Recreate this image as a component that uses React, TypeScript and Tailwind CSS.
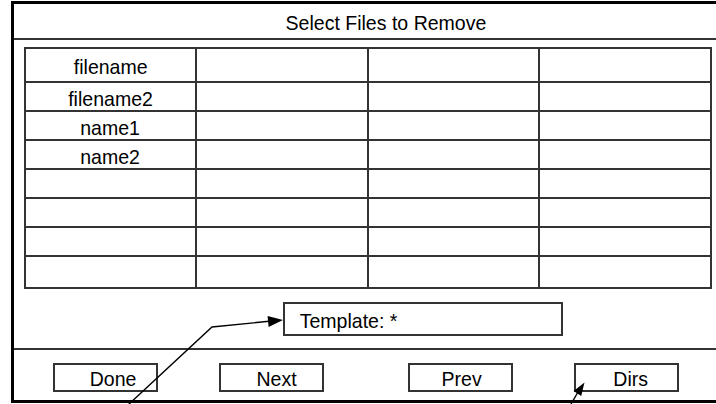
import React from "react";

const rows = ["filename", "filename2", "name1", "name2", "", "", "", ""];
const rowH = [34, 29, 29, 29, 29, 29, 29, 32];
const colW = [171, 172, 171, 172];

function T({ children }: { children: React.ReactNode }) {
  return (
    <span className="inline-block scale-x-[0.93] text-[21px] leading-none whitespace-nowrap">
      {children}
    </span>
  );
}

export default function App() {
  return (
    <div
      className="relative w-[716px] h-[404px] overflow-hidden bg-white text-black"
      style={{ fontFamily: '"Liberation Sans", Arial, sans-serif' }}
    >
      <div className="pl-[11px] pt-[1px]">
        <div className="w-[750px] h-[402px] border-[3px] border-black flex flex-col">
          <div className="h-[36px] border-b-2 border-[#333] flex items-center justify-center pt-[2px]">
            <T>Select Files to Remove</T>
          </div>
          <div className="pl-[10px] pt-[7px]">
            <div className="w-[688px] border-l-2 border-t-2 border-[#333]">
              {rows.map((r, i) => (
                <div key={i} className="flex" style={{ height: rowH[i] }}>
                  {colW.map((w, j) => (
                    <div
                      key={j}
                      className="border-r-2 border-b-2 border-[#333] flex items-center justify-center pt-[3px]"
                      style={{ width: w }}
                    >
                      {j === 0 && r ? <T>{r}</T> : null}
                    </div>
                  ))}
                </div>
              ))}
            </div>
          </div>
          <div className="pl-[269px] pt-[13px] pb-[12px] border-b-2 border-[#333]">
            <div className="w-[280px] h-[34px] border-2 border-[#333] flex items-center pl-[11px] pt-[2px]">
              <T>Template: *</T>
            </div>
          </div>
          <div className="flex pt-[13px] pl-[39px]">
            <button className="w-[105px] h-[29px] border-2 border-[#333] flex items-center justify-center pl-[16px] pt-[2px]">
              <T>Done</T>
            </button>
            <button className="ml-[61px] w-[105px] h-[29px] border-2 border-[#333] flex items-center justify-center pl-[11px] pt-[2px]">
              <T>Next</T>
            </button>
            <button className="ml-[84px] w-[105px] h-[29px] border-2 border-[#333] flex items-center justify-center pl-[3px] pt-[2px]">
              <T>Prev</T>
            </button>
            <button className="ml-[61px] w-[105px] h-[29px] border-2 border-[#333] flex items-center justify-center pl-[9px] pt-[2px]">
              <T>Dirs</T>
            </button>
          </div>
        </div>
      </div>
      <svg
        className="absolute left-0 top-0 pointer-events-none"
        width={716}
        height={404}
        viewBox="0 0 716 404"
      >
        <polyline
          points="128,405 212,327 269,321.3"
          fill="none"
          stroke="black"
          strokeWidth={1.4}
        />
        <polygon points="283,320 267.6,316 268.6,327" fill="black" />
        <line x1={570.5} y1={405} x2={578} y2={392} stroke="black" strokeWidth={1.4} />
        <polygon points="584.5,382.5 581.2,395.9 573.6,390.9" fill="black" />
      </svg>
    </div>
  );
}
